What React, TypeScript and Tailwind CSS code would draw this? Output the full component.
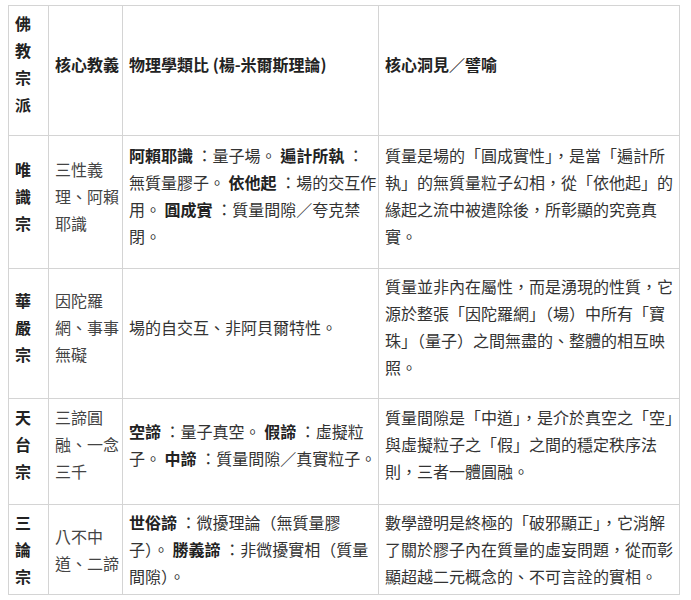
import React from "react";

type Row = {
  school: string;
  doctrine: string;
  physics: React.ReactNode;
  insight: string;
  pad: string;
};

const rows: Row[] = [
  {
    school: "唯識宗",
    doctrine: "三性義理、阿賴耶識",
    physics: (
      <>
        <b className="font-bold text-[#222]">阿賴耶識</b> ：量子場。 <b className="font-bold text-[#222]">遍計所執</b> ：無質量膠子。{" "}
        <b className="font-bold text-[#222]">依他起</b> ：場的交互作用。 <b className="font-bold text-[#222]">圓成實</b> ：質量間隙／夸克禁閉。
      </>
    ),
    insight: "質量是場的「圓成實性」，是當「遍計所執」的無質量粒子幻相，從「依他起」的緣起之流中被遣除後，所彰顯的究竟真實。",
    pad: "pt-[6px] pb-[18px]",
  },
  {
    school: "華嚴宗",
    doctrine: "因陀羅網、事事無礙",
    physics: <>場的自交互、非阿貝爾特性。</>,
    insight: "質量並非內在屬性，而是湧現的性質，它源於整張「因陀羅網」（場）中所有「寶珠」（量子）之間無盡的、整體的相互映照。",
    pad: "pt-[4px] pb-[17px]",
  },
  {
    school: "天台宗",
    doctrine: "三諦圓融、一念三千",
    physics: (
      <>
        <b className="font-bold text-[#222]">空諦</b> ：量子真空。 <b className="font-bold text-[#222]">假諦</b> ：虛擬粒子。{" "}
        <b className="font-bold text-[#222]">中諦</b> ：質量間隙／真實粒子。
      </>
    ),
    insight: "質量間隙是「中道」，是介於真空之「空」與虛擬粒子之「假」之間的穩定秩序法則，三者一體圓融。",
    pad: "pt-[5px] pb-[19px]",
  },
  {
    school: "三論宗",
    doctrine: "八不中道、二諦",
    physics: (
      <>
        <b className="font-bold text-[#222]">世俗諦</b> ：微擾理論（無質量膠子）。 <b className="font-bold text-[#222]">勝義諦</b> ：非微擾實相（質量間隙）。
      </>
    ),
    insight: "數學證明是終極的「破邪顯正」，它消解了關於膠子內在質量的虛妄問題，從而彰顯超越二元概念的、不可言詮的實相。",
    pad: "pt-[4px] pb-[4px]",
  },
];

export default function App() {
  return (
    <div
      className="bg-white pt-[5px] pl-[8px] text-[16px] leading-[27px] text-[#333]"
      style={{ fontFamily: '"Noto Sans CJK TC", "Noto Sans", sans-serif' }}
    >
      <table className="w-[671px] table-fixed border-collapse">
        <colgroup>
          <col className="w-[40px]" />
          <col className="w-[74px]" />
          <col className="w-[256px]" />
          <col className="w-[301px]" />
        </colgroup>
        <thead>
          <tr>
            <th className="border border-[#d4d4d4] pl-[6px] pr-[3px] pt-[4px] pb-[17px] text-left align-middle font-bold text-[#222]">
              佛教宗派
            </th>
            <th className="border border-[#d4d4d4] pl-[6px] pr-[3px] pt-[4px] pb-[17px] text-left align-middle font-bold text-[#222]">
              核心教義
            </th>
            <th className="border border-[#d4d4d4] pl-[6px] pr-0 pt-[4px] pb-[17px] text-left align-middle font-bold text-[#222]">
              物理學類比 (楊-米爾斯理論)
            </th>
            <th className="border border-[#d4d4d4] pl-[6px] pr-[3px] pt-[4px] pb-[17px] text-left align-middle font-bold text-[#222]">
              核心洞見／譬喻
            </th>
          </tr>
        </thead>
        <tbody>
          {rows.map((r) => (
            <tr key={r.school}>
              <td className={`border border-[#d4d4d4] pl-[6px] pr-[3px] align-middle font-bold text-[#222] ${r.pad}`}>
                {r.school}
              </td>
              <td className={`border border-[#d4d4d4] pl-[6px] pr-[3px] align-middle text-[#444] ${r.pad}`}>
                {r.doctrine}
              </td>
              <td className={`border border-[#d4d4d4] pl-[6px] pr-0 align-middle ${r.pad}`}>{r.physics}</td>
              <td className={`border border-[#d4d4d4] pl-[6px] pr-[3px] align-middle ${r.pad}`}>{r.insight}</td>
            </tr>
          ))}
        </tbody>
      </table>
    </div>
  );
}
